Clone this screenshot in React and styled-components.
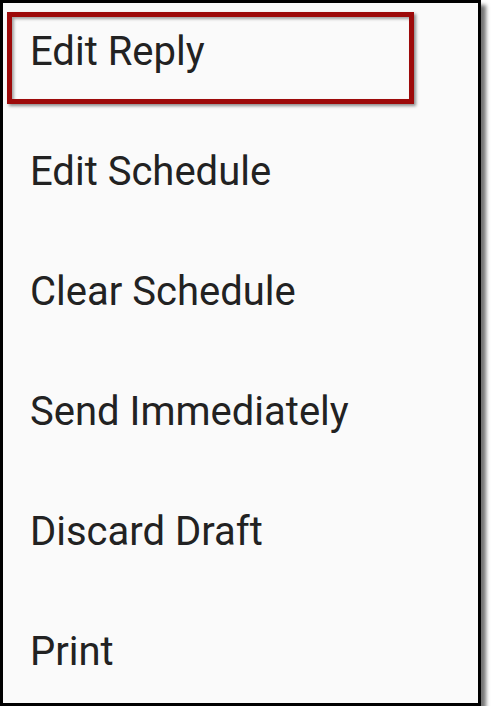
import React from 'react';
import styled, { createGlobalStyle } from 'styled-components';

const GlobalStyle = createGlobalStyle`
  html, body {
    margin: 0;
    padding: 0;
    background: #ffffff;
  }
  body {
    font-family: Roboto, 'Noto Sans', 'Liberation Sans', sans-serif;
  }
`;

const items = [
  'Edit Reply',
  'Edit Schedule',
  'Clear Schedule',
  'Send Immediately',
  'Discard Draft',
  'Print',
];

const App = () => (
  <>
    <GlobalStyle />
    <Frame>
      <Menu>
        {items.map((label) => (
          <Item key={label}>{label}</Item>
        ))}
      </Menu>
      <Highlight />
    </Frame>
  </>
);

const Frame = styled.div`
  position: relative;
  width: 481px;
  height: 706px;
  box-sizing: border-box;
  border: 3px solid #000;
  background: #fafafa;
  overflow: hidden;
  box-shadow: 5px 5px 4px rgba(0, 0, 0, 0.55);
`;

const Menu = styled.ul`
  list-style: none;
  margin: 0;
  padding: 0;
`;

const Item = styled.li`
  height: 120px;
  box-sizing: border-box;
  padding: 29px 0 0 27px;
  font-size: 40px;
  font-weight: 400;
  line-height: 40px;
  color: #222222;
  white-space: nowrap;
`;

const Highlight = styled.div`
  position: absolute;
  left: 4px;
  top: 9px;
  width: 407px;
  height: 92px;
  box-sizing: border-box;
  border: 5px solid #9d0a0a;
  box-shadow: 2px 2px 3px rgba(0, 0, 0, 0.45),
    inset 2px 2px 3px rgba(0, 0, 0, 0.35);
  pointer-events: none;
`;

export default App;
